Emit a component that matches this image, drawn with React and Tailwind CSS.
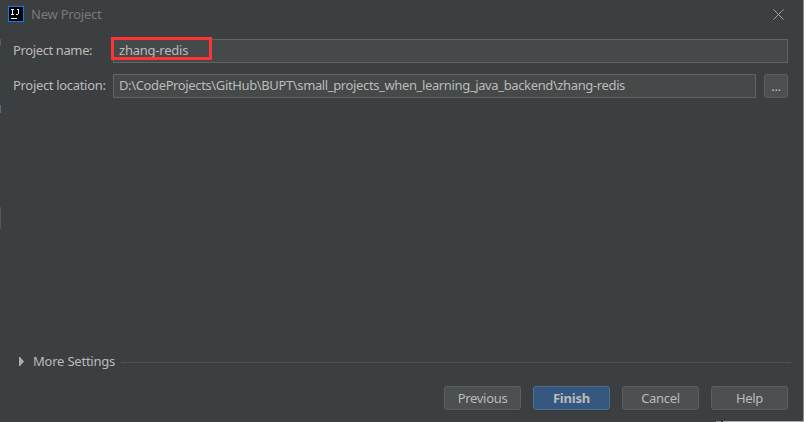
import React from "react";

function Label({ className = "", children }) {
  return <span className={"block whitespace-pre leading-5 " + className}>{children}</span>;
}

function DialogButton({ primary, children }) {
  return (
    <button
      className={
        "flex h-6 w-[77px] items-center justify-center rounded-[3px] border text-[13px] leading-5 shadow-[0_1px_0_#37393a] " +
        (primary
          ? "border-[#4c708c] bg-[#365880] font-bold tracking-[-0.2px]"
          : "border-[#5e6060] bg-[#4c5052] tracking-[-0.3px]")
      }
    >
      {children}
    </button>
  );
}

export default function App() {
  return (
    <div className="relative flex h-[422px] w-[804px] overflow-hidden bg-[#3c3f41] font-['Noto_Sans','Noto_Sans_CJK_SC',sans-serif] text-[13px] text-[#bbbbbb]">
      <div className="flex h-[422px] w-[803px] flex-col">
        <header className="flex h-[39px] items-start pl-2 pr-[19px] pt-[6px]">
          <svg width="16" height="16" viewBox="0 0 16 16" shapeRendering="crispEdges">
            <rect width="16" height="16" fill="#087cfa" />
            <rect x="1" y="1" width="14" height="14" fill="#000" />
            <path d="M3 3.5h3M4.5 3v5M3 8.5h3M9 3.5h2M10.5 3v5M8 8.5h2M3 12.5h6" fill="none" stroke="#fff" />
          </svg>
          <Label className="ml-[7px] -mt-[2px] tracking-[-0.22px] text-[#77797b]">New Project</Label>
          <svg className="ml-auto mt-[3px]" width="11" height="11" viewBox="0 0 11 11">
            <path d="M.5.5l10 10M10.5.5l-10 10" stroke="#a0a2a3" fill="none" />
          </svg>
        </header>

        <div className="flex h-6 items-center pl-[13px]">
          <Label className="w-[100px] pb-0.5 tracking-[-0.38px]">Project name:</Label>
          <div className="relative flex h-6 w-[675px] items-center border border-[#646464] bg-[#45494a] pl-[5px]">
            <Label className="pb-0.5 tracking-[-0.22px]">zhang-redis</Label>
            <div className="absolute -left-[3px] -top-[3px] h-[23px] w-[101px] border-[3px] border-[#fc3534]" />
          </div>
        </div>

        <div className="mt-[11px] flex h-6 items-center pl-[13px]">
          <Label className="w-[100px] pb-0.5 tracking-[-0.32px]">Project location:</Label>
          <div className="flex h-6 w-[643px] items-center border border-[#646464] bg-[#45494a] pl-[5px]">
            <Label className="pb-0.5 tracking-[-0.37px]">
              D:\CodeProjects\GitHub\BUPT\small_projects_when_learning_java_backend\zhang-redis
            </Label>
          </div>
          <button className="ml-2 flex h-6 w-6 items-center justify-center rounded-[3px] border border-[#5e6060] bg-[#4c5052] leading-5 tracking-[-0.3px] shadow-[0_1px_0_#37393a]">
            ...
          </button>
        </div>

        <div className="mt-auto flex h-5 items-center pl-[19px] pr-3">
          <svg className="mb-0.5" width="5" height="9" viewBox="0 0 5 9">
            <path d="M0 0h1l4 4.5L1 9H0z" fill="#adadad" />
          </svg>
          <Label className="ml-[9px] w-[88px] pb-0.5 tracking-[-0.22px]">More Settings</Label>
          <div className="h-px flex-1 bg-[#515151]" />
        </div>

        <footer className="mb-3 mt-[14px] flex justify-end gap-3 pr-[15px]">
          <DialogButton>Previous</DialogButton>
          <DialogButton primary>Finish</DialogButton>
          <DialogButton>Cancel</DialogButton>
          <DialogButton>Help</DialogButton>
        </footer>
      </div>
      <div className="h-full w-px bg-[#8c8c8c]" />
      <div className="absolute bottom-0 right-0 flex h-px w-[88px]">
        <span className="w-[5px] bg-[#8c8c8c]" />
        <span className="w-[2px] bg-[#303234]" />
        <span className="flex-1 bg-[#a9a6a6]" />
      </div>
      <div className="absolute left-0 top-[39px] h-[7px] w-px bg-[#6b5546]" />
      <div className="absolute left-0 top-[105px] h-[8px] w-px bg-[#5d6a78]" />
      <div className="absolute left-0 top-[207px] h-[22px] w-px bg-[#57574b]" />
    </div>
  );
}
